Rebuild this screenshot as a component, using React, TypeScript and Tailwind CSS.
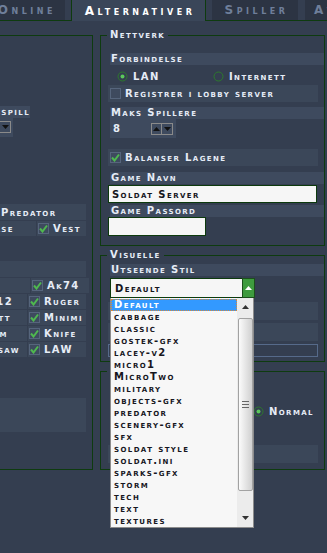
import React from 'react';

const T = "font-['DejaVu_Sans',sans-serif] font-bold [font-variant:small-caps] text-[10px] tracking-[1.4px]";

const styles = [
    'Default', 'cabbage', 'classic', 'gostek-gfx', 'lacey-v2', 'micro1', 'MicroTwo', 'military',
    'objects-gfx', 'predator', 'scenery-gfx', 'sfx', 'soldat style', 'soldat.ini', 'sparks-gfx',
    'storm', 'tech', 'text', 'textures',
];

function Check({ checked }: { checked?: boolean }) {
    return (
        <div className="w-[11px] h-[11px] shrink-0 border border-[#56657c] bg-[#3e4a5e] flex items-center justify-center">
            {checked && (
                <svg width="9" height="9" viewBox="0 0 9 9">
                    <path d="M1 4.5 L3.5 7.5 L8 1.5" stroke="#4fb84f" strokeWidth="2" fill="none" />
                </svg>
            )}
        </div>
    );
}

function Radio({ on }: { on?: boolean }) {
    return (
        <svg width="11" height="11" viewBox="0 0 11 11" className="shrink-0">
            <circle cx="5.5" cy="5.5" r="4.5" stroke="#2c7a2c" strokeWidth="1" fill="none" />
            {on && <circle cx="5.5" cy="5.5" r="2" fill="#5bc95b" />}
        </svg>
    );
}

function Label({ children }: { children: React.ReactNode }) {
    return (
        <div className="self-start ml-[9px] h-[12px] px-[1px] bg-[#3e4a5e] leading-[12px] whitespace-nowrap">
            {children}
        </div>
    );
}

function Tri({ up, color = '#111' }: { up?: boolean; color?: string }) {
    return (
        <svg width="7" height="4" viewBox="0 0 7 4">
            <polygon points={up ? '0,4 7,4 3.5,0' : '0,0 7,0 3.5,4'} fill={color} />
        </svg>
    );
}

export default function App() {
    return (
        <div className={`relative w-[327px] h-[553px] overflow-hidden bg-[#343e50] text-[#e6ecf6] ${T}`}>
            {/* tabs */}
            <div className="flex h-[21px] border-b border-[#0e3b0f] text-[12px] tracking-[3.5px] whitespace-nowrap">
                <div className="w-[65px] h-[20px] shrink-0 bg-[#2c3443] flex justify-end items-center pr-[9px] text-[#6f7f9a]">Online</div>
                <div className="ml-[6px] w-[135px] h-[21px] shrink-0 relative z-10 bg-[#3a4659] border-x border-[#0e3b0f] flex justify-center items-center pl-[3px] text-white">Alternativer</div>
                <div className="ml-[6px] w-[86px] h-[20px] shrink-0 bg-[#2c3443] flex justify-center items-center pl-[3px] text-[#6f7f9a]">Spiller</div>
                <div className="ml-[7px] w-[60px] h-[20px] shrink-0 bg-[#2c3443] flex items-center pl-[9px] text-[#6f7f9a]">Avansert</div>
            </div>

            <div className="flex">
                {/* left panel, cut off by the window */}
                <div className="mt-[14px] w-[93px] h-[435px] shrink-0 border-y border-r border-[#0e3b0f] flex flex-col whitespace-nowrap">
                    <div className="mt-[70px] w-[30px] h-[12px] bg-[#3e4a5e] flex justify-end leading-[12px]">Treningsspill</div>
                    <div className="w-[13px] h-[19px] bg-[#3e4a5e] pt-[3px]">
                        <div className="w-[11px] h-[12px] border-y border-r border-[#8a8a8a] flex items-center justify-center">
                            <Tri />
                        </div>
                    </div>

                    <div className="mt-[67px] w-[86px] h-[16px] bg-[#3b4759] flex items-center">
                        <span className="pl-[1px]">Predator</span>
                    </div>
                    <div className="mt-[1px] h-[15px] flex gap-[1px]">
                        <div className="w-[36px] bg-[#3b4759] flex justify-end items-center pr-[22px]">Forsterkelse</div>
                        <div className="w-[49px] bg-[#3b4759] flex items-center gap-[4px] pl-[1px]">
                            <Check checked />
                            <span>Vest</span>
                        </div>
                    </div>

                    <div className="mt-[25px] w-[86px] h-[16px] bg-[#3b4759]" />
                    <div className="mt-[1px] flex flex-col gap-[1px]">
                        {[
                            ['Mp5', 30, 'Ak74'],
                            ['Spas 12', 14, 'Ruger'],
                            ['Barrett', 16, 'Minimi'],
                            ['Ussocom', 19, 'Knife'],
                            ['Chainsaw', 7, 'LAW'],
                        ].map(([a, pr, b]) => (
                            <div key={b as string} className="h-[15px] flex gap-[1px]">
                                <div className="w-[27px] bg-[#3b4759] flex justify-end items-center" style={{ paddingRight: pr as number }}>{a}</div>
                                <div className="w-[58px] bg-[#3b4759] flex items-center gap-[4px] pl-[1px]">
                                    <Check checked />
                                    <span>{b}</span>
                                </div>
                            </div>
                        ))}
                    </div>

                    <div className="mt-[41px] w-[86px] h-[34px] bg-[#3b4759]" />
                </div>

                {/* right column */}
                <div className="ml-[7px] mt-[8px] w-[225px] shrink-0 flex flex-col">
                    <fieldset className="border border-[#0e3b0f] pb-[9px] flex flex-col">
                        <legend className="ml-[6px] px-[3px] leading-[12px]">Nettverk</legend>
                        <div className="mt-[12px]"><Label>Forbindelse</Label></div>
                        <div className="mt-[5px] h-[12px] flex items-center">
                            <div className="ml-[16px] flex items-center gap-[5px] w-[96px]"><Radio on /><span>LAN</span></div>
                            <div className="flex items-center gap-[5px]"><Radio /><span>Internett</span></div>
                        </div>
                        <div className="mt-[3px] ml-[7px] w-[210px] h-[17px] bg-[#3b4759] flex items-center gap-[4px] pl-[2px] whitespace-nowrap">
                            <Check />
                            <span>Registrer i lobby server</span>
                        </div>
                        <div className="mt-[5px]"><Label>Maks Spillere</Label></div>
                        <div className="ml-[9px] w-[66px] h-[19px] bg-[#3e4a5e] flex items-center pl-[3px]">
                            <span className="flex-1">8</span>
                            <div className="mr-[3px] flex border border-[#8a8a8a]">
                                <div className="w-[10px] h-[10px] border-r border-[#8a8a8a] flex items-center justify-center"><Tri up /></div>
                                <div className="w-[10px] h-[10px] flex items-center justify-center"><Tri /></div>
                            </div>
                        </div>
                        <div className="mt-[11px] ml-[7px] w-[210px] h-[17px] bg-[#3b4759] flex items-center gap-[4px] pl-[2px]">
                            <Check checked />
                            <span>Balanser Lagene</span>
                        </div>
                        <div className="mt-[6px]"><Label>Game Navn</Label></div>
                        <div className="mt-[1px] ml-[7px] w-[209px] h-[18px] bg-[#f6f6f6] border border-[#0d3a0d] flex items-center pl-[3px] text-[#15151c]">
                            Soldat Server
                        </div>
                        <div className="mt-[2px]"><Label>Game Passord</Label></div>
                        <div className="ml-[7px] w-[98px] h-[19px] bg-[#f6f6f6] border border-[#0d3a0d]" />
                    </fieldset>

                    <fieldset className="mt-[3px] border border-[#0e3b0f] pb-[4px] flex flex-col">
                        <legend className="ml-[6px] px-[3px] leading-[12px]">Visuelle</legend>
                        <div className="mt-[3px]"><Label>Utseende Stil</Label></div>
                        <div className="relative z-20 mt-[2px] ml-[9px] w-[145px] h-[20px] flex">
                            <div className="flex-1 bg-[#f6f6f6] border-y border-l border-[#0d3a0d] flex items-center pl-[4px] text-[#15151c]">Default</div>
                            <div className="w-[13px] bg-[#3e9b3e] border border-[#1c4f1c] flex items-center justify-center">
                                <Tri up color="#ffffff" />
                            </div>
                            {/* open dropdown */}
                            <div className="absolute left-0 top-full w-[144px] h-[230px] bg-[#f7f7f7] border-x border-b border-[#8c8c8c] flex">
                                <div className="flex-1 flex flex-col pt-[1px] text-[#16161e] whitespace-nowrap">
                                    {styles.map((s, i) => (
                                        <div
                                            key={s}
                                            className={i === 0
                                                ? 'h-[12px] leading-[10px] pl-[2px] bg-[#3399ff] border border-dotted border-[#d8893a] text-white'
                                                : 'h-[12px] leading-[12px] pl-[3px]'}
                                        >
                                            {s}
                                        </div>
                                    ))}
                                </div>
                                <div className="w-[16px] bg-[#ececec] flex flex-col items-center">
                                    <div className="h-[18px] flex items-center justify-center"><Tri up color="#333" /></div>
                                    <div className="mt-[2px] w-[15px] h-[173px] rounded-[2px] border border-[#a2a2a2] bg-gradient-to-r from-[#fbfbfb] to-[#d0d0d0] flex flex-col items-center justify-center gap-[2px]">
                                        <div className="w-[7px] h-[1px] bg-[#666]" />
                                        <div className="w-[7px] h-[1px] bg-[#666]" />
                                        <div className="w-[7px] h-[1px] bg-[#666]" />
                                    </div>
                                    <div className="flex-1" />
                                    <div className="h-[18px] flex items-center justify-center"><Tri color="#333" /></div>
                                </div>
                            </div>
                        </div>
                        <div className="mt-[4px] ml-[7px] w-[210px] h-[18px] bg-[#3b4759]" />
                        <div className="mt-[3px] ml-[7px] w-[210px] h-[18px] bg-[#3b4759]" />
                        <div className="mt-[3px] ml-[7px] w-[210px] h-[13px] border border-[#566a8a]" />
                    </fieldset>

                    <fieldset className="mt-[3px] border border-[#0e3b0f] pb-[6px] flex flex-col">
                        <legend className="ml-[6px] w-[36px] h-[12px]" />
                        <div className="mt-[29px] h-[11px] flex items-center gap-[5px] pl-[152px]">
                            <Radio on />
                            <span>Normal</span>
                        </div>
                        <div className="mt-[28px] ml-[7px] w-[210px] h-[18px] bg-[#3b4759]" />
                    </fieldset>
                </div>
            </div>
        </div>
    );
}
